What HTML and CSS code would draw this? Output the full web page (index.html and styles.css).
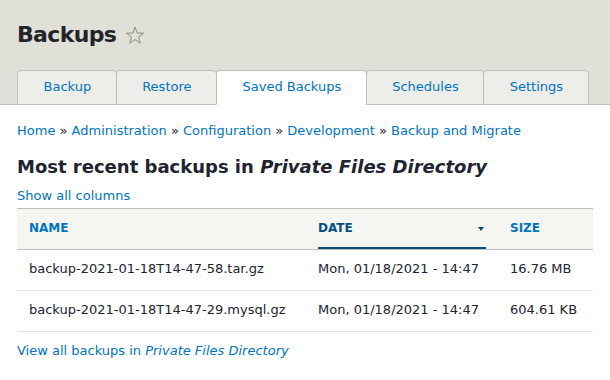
FILE: index.html
```html
<!DOCTYPE html>
<html lang="en">
<head>
    <meta charset="UTF-8">
    <meta name="viewport" content="width=device-width, initial-scale=1.0">
    <title>Backups</title>
    <link rel="stylesheet" href="styles.css">
</head>
<body>
    <header class="page-header">
        <h1 class="page-title">
            Backups
            <svg class="star" width="20" height="20" viewBox="0 0 20 20">
                <path d="M10 1 L12.2 7 L18.6 7.2 L13.5 11.1 L15.3 17.3 L10 13.6 L4.7 17.3 L6.5 11.1 L1.4 7.2 L7.8 7 Z" fill="none" stroke="#8a8a86" stroke-width="1" stroke-linejoin="round"/>
            </svg>
        </h1>
        <ul class="tabs">
            <li class="tab"><a href="#">Backup</a></li>
            <li class="tab"><a href="#">Restore</a></li>
            <li class="tab is-active"><a href="#">Saved Backups</a></li>
            <li class="tab"><a href="#">Schedules</a></li>
            <li class="tab"><a href="#">Settings</a></li>
        </ul>
    </header>

    <main class="content">
        <nav class="breadcrumb">
            <a href="#">Home</a> » <a href="#">Administration</a> » <a href="#">Configuration</a> » <a href="#">Development</a> » <a href="#">Backup and Migrate</a>
        </nav>

        <h2 class="section-title">Most recent backups in <em>Private Files Directory</em></h2>

        <a href="#" class="show-columns">Show all columns</a>

        <table class="backups">
            <thead>
                <tr>
                    <th class="col-name"><a href="#">Name</a></th>
                    <th class="col-date is-active">
                        <span class="th-inner"><a href="#">Date</a><span class="sort-icon"></span></span>
                    </th>
                    <th class="col-size"><a href="#">Size</a></th>
                </tr>
            </thead>
            <tbody>
                <tr>
                    <td>backup-2021-01-18T14-47-58.tar.gz</td>
                    <td>Mon, 01/18/2021 - 14:47</td>
                    <td>16.76 MB</td>
                </tr>
                <tr>
                    <td>backup-2021-01-18T14-47-29.mysql.gz</td>
                    <td>Mon, 01/18/2021 - 14:47</td>
                    <td>604.61 KB</td>
                </tr>
            </tbody>
        </table>

        <a href="#" class="view-all">View all backups in <em>Private Files Directory</em></a>
    </main>
</body>
</html>
```

FILE: styles.css
```css
* {
    box-sizing: border-box;
    margin: 0;
    padding: 0;
}

body {
    font-family: 'DejaVu Sans', Verdana, sans-serif;
    font-size: 13px;
    line-height: 20px;
    color: #222330;
    background-color: #fff;
}

a {
    color: #0074bd;
    text-decoration: none;
}

.page-header {
    background-color: #e0e0d8;
    border-bottom: 1px solid #bfbfba;
    padding: 21px 17px 0;
}

.page-title {
    display: flex;
    align-items: center;
    font-size: 22px;
    line-height: 28px;
    font-weight: bold;
    letter-spacing: -0.03em;
    color: #232429;
    margin-bottom: 21px;
}

.star {
    margin-left: 9px;
    margin-top: 1px;
}

.tabs {
    display: flex;
    list-style: none;
    margin-bottom: -1px;
}

.tab {
    flex-shrink: 0;
    white-space: nowrap;
    background-color: #ededea;
    border: 1px solid #bfbfba;
    border-radius: 4px 4px 0 0;
    margin-right: -1px;
}

.tab a {
    display: block;
    padding: 6px 24.5px 7px 25.5px;
}

.tab.is-active {
    background-color: #fff;
    border-bottom-color: #fff;
}

.content {
    padding: 16px 17px 0;
}

.section-title {
    font-size: 18px;
    line-height: 23px;
    font-weight: bold;
    margin-top: 14px;
}

.section-title em {
    font-style: italic;
}

.show-columns {
    display: block;
    margin-top: 8px;
}

.backups {
    width: 100%;
    border-collapse: collapse;
    table-layout: fixed;
    margin-top: 2px;
}

.backups th {
    background-color: #f5f5f2;
    border-top: 1px solid #bfbfba;
    border-bottom: 1px solid #bfbfba;
    text-align: left;
    text-transform: uppercase;
    font-size: 12px;
    font-weight: bold;
    padding: 9px 12px 11px;
    position: relative;
}

.col-name {
    width: 289px;
}

.col-date {
    width: 192px;
}

.backups th.is-active a {
    color: #004f80;
}

.backups th.is-active::after {
    content: "";
    position: absolute;
    left: 12px;
    right: 12px;
    bottom: 0;
    height: 2px;
    background-color: #004f80;
}

.th-inner {
    display: flex;
    justify-content: space-between;
    align-items: center;
}

.sort-icon {
    border-left: 3px solid transparent;
    border-right: 3px solid transparent;
    border-top: 4px solid #004f80;
    margin-right: 2px;
    margin-top: 2px;
}

.backups td {
    border-bottom: 1px solid #e6e4df;
    padding: 9px 12px 11px;
}

.view-all {
    display: block;
    margin-top: 9px;
}

.view-all em {
    font-style: italic;
}
```
